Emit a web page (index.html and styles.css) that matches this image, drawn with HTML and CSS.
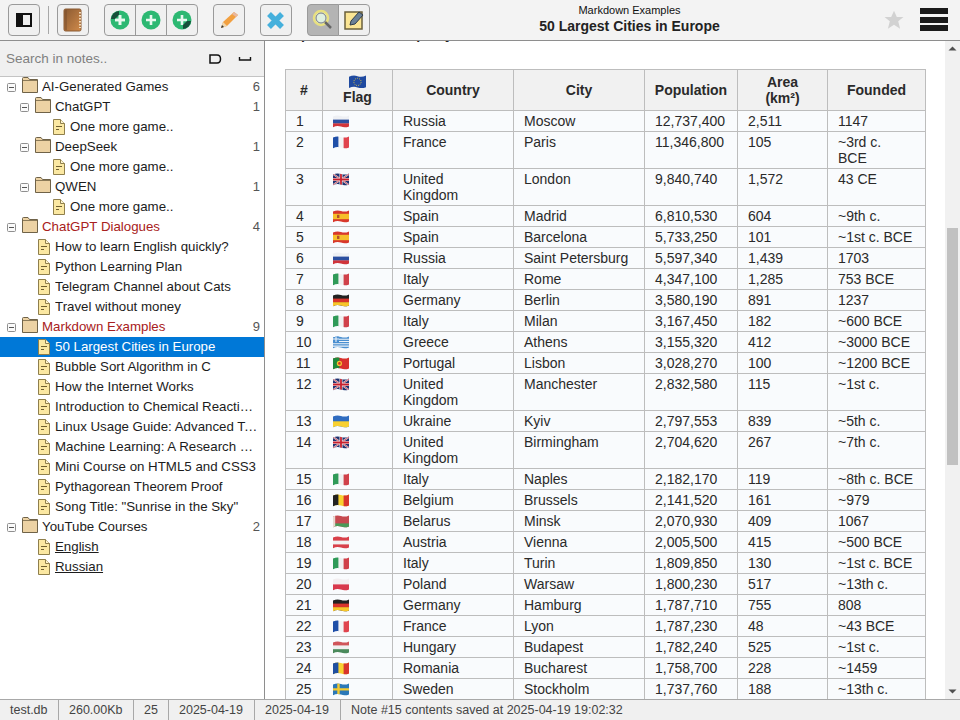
FILE: index.html
```html
<!DOCTYPE html>
<html lang="en">
<head>
<meta charset="utf-8">
<title>50 Largest Cities in Europe</title>
<link rel="stylesheet" href="styles.css">
</head>
<body>
<svg class="defs" aria-hidden="true">
  <defs>
    <clipPath id="wave"><path d="M0 1.600Q4 -.4 8 1T16 .4V11.400Q12 13 8 11.600T0 12.200Z"/></clipPath>
    <linearGradient id="bookg" x1="0" x2="1" y1="0" y2="1"><stop offset="0" stop-color="#8a5a32"/><stop offset="1" stop-color="#d08a4a"/></linearGradient>
    <symbol id="ru" viewBox="0 0 16 13"><g clip-path="url(#wave)"><rect width="16" height="13" fill="#eef0f4"/><rect y="4.600" width="16" height="4" fill="#2b4fa0"/><rect y="8.400" width="16" height="5" fill="#d0343a"/></g></symbol>
    <symbol id="fr" viewBox="0 0 16 13"><g clip-path="url(#wave)"><rect width="16" height="13" fill="#f2f2f4"/><rect width="5.400" height="13" fill="#1f4fa8"/><rect x="10.600" width="5.400" height="13" fill="#e0444e"/></g></symbol>
    <symbol id="gb" viewBox="0 0 16 13"><g clip-path="url(#wave)"><rect width="16" height="13" fill="#1f3270"/><path d="M0 1 16 12M16 1 0 12" stroke="#e8e8ee" stroke-width="1.800"/><path d="M0 1 16 12M16 1 0 12" stroke="#c8202e" stroke-width=".7"/><path d="M8 0V13M0 6.500H16" stroke="#eee" stroke-width="3"/><path d="M8 0V13M0 6.500H16" stroke="#c8202e" stroke-width="1.800"/></g></symbol>
    <symbol id="es" viewBox="0 0 16 13"><g clip-path="url(#wave)"><rect width="16" height="13" fill="#d8382c"/><rect y="3.800" width="16" height="5.400" fill="#f6bf2a"/><rect x="4" y="4.800" width="2.400" height="3.200" fill="#b0502c"/></g></symbol>
    <symbol id="it" viewBox="0 0 16 13"><g clip-path="url(#wave)"><rect width="16" height="13" fill="#f0f0f0"/><rect width="5.400" height="13" fill="#2f9a58"/><rect x="10.600" width="5.400" height="13" fill="#d0414a"/></g></symbol>
    <symbol id="de" viewBox="0 0 16 13"><g clip-path="url(#wave)"><rect width="16" height="13" fill="#222"/><rect y="4.600" width="16" height="4" fill="#d8352c"/><rect y="8.200" width="16" height="5" fill="#f8c62a"/></g></symbol>
    <symbol id="gr" viewBox="0 0 16 13"><g clip-path="url(#wave)"><rect width="16" height="13" fill="#4a8fd0"/><path d="M0 3.200H16M0 5.500H16M0 7.800H16M0 10.100H16" stroke="#eef3f8" stroke-width="1.100"/><rect width="6" height="6" fill="#4a8fd0"/><path d="M3 0V6M0 3H6" stroke="#eef3f8" stroke-width="1.100"/></g></symbol>
    <symbol id="pt" viewBox="0 0 16 13"><g clip-path="url(#wave)"><rect width="16" height="13" fill="#d8312c"/><rect width="6.400" height="13" fill="#1f8a3c"/><circle cx="6.400" cy="6.400" r="2.600" fill="#f2c530"/><circle cx="6.400" cy="6.400" r="1.300" fill="#d8312c"/></g></symbol>
    <symbol id="ua" viewBox="0 0 16 13"><g clip-path="url(#wave)"><rect width="16" height="13" fill="#2f6cc0"/><rect y="6.300" width="16" height="7" fill="#f8d030"/></g></symbol>
    <symbol id="be" viewBox="0 0 16 13"><g clip-path="url(#wave)"><rect width="16" height="13" fill="#f8d030"/><rect width="5.400" height="13" fill="#222"/><rect x="10.600" width="5.400" height="13" fill="#d8352c"/></g></symbol>
    <symbol id="by" viewBox="0 0 16 13"><g clip-path="url(#wave)"><rect width="16" height="13" fill="#c64a50"/><rect y="8.400" width="16" height="5" fill="#4a9a58"/><rect width="2.200" height="13" fill="#e8d8d0"/></g></symbol>
    <symbol id="at" viewBox="0 0 16 13"><g clip-path="url(#wave)"><rect width="16" height="13" fill="#d8404a"/><rect y="4.600" width="16" height="3.800" fill="#f2f2f2"/></g></symbol>
    <symbol id="pl" viewBox="0 0 16 13"><g clip-path="url(#wave)"><rect width="16" height="13" fill="#f2eef0"/><rect y="6.400" width="16" height="7" fill="#d8384c"/></g></symbol>
    <symbol id="hu" viewBox="0 0 16 13"><g clip-path="url(#wave)"><rect width="16" height="13" fill="#f0f0f0"/><rect width="16" height="4.400" fill="#d0555a"/><rect y="8.200" width="16" height="5" fill="#4a8a5c"/></g></symbol>
    <symbol id="ro" viewBox="0 0 16 13"><g clip-path="url(#wave)"><rect width="16" height="13" fill="#f8d030"/><rect width="5.400" height="13" fill="#1f4fa0"/><rect x="10.600" width="5.400" height="13" fill="#d8352c"/></g></symbol>
    <symbol id="se" viewBox="0 0 16 13"><g clip-path="url(#wave)"><rect width="16" height="13" fill="#2a78b8"/><path d="M5.500 0V13M0 6.400H16" stroke="#f4ca30" stroke-width="2.400"/></g></symbol>
    <symbol id="eu" viewBox="0 0 16 13"><g clip-path="url(#wave)"><rect width="16" height="13" fill="#1f4aa0"/><circle cx="8" cy="6.400" r="3.400" fill="none" stroke="#e8c840" stroke-width=".9" stroke-dasharray=".9 1"/></g></symbol>
    <symbol id="folder" viewBox="0 0 16 16"><path d="M.5 15.500V1.500Q.5 .5 1.500 .5H6L7.500 2.500H15.500V15.500Z" fill="#ecd2a4" stroke="#6f6248"/><path d="M1 3.500H15" stroke="#8b7a58"/></symbol>
    <symbol id="note" viewBox="0 0 14 16"><path d="M1.500 .5H8.500L12.500 4.500V15.500H1.500Z" fill="#fbe8a2" stroke="#8f7f4c"/><path d="M8.500 .5V4.500H12.500" fill="#fff6d0" stroke="#8f7f4c"/><path d="M4 7.500H10M4 10.500H7" stroke="#6f6030"/></symbol>
    <symbol id="minus" viewBox="0 0 9 9"><rect x=".5" y=".5" width="8" height="8" rx="1" fill="#fafafa" stroke="#8f8f8f"/><path d="M2 4.500H7" stroke="#555"/></symbol>
    <symbol id="plus" viewBox="0 0 20 20"><circle cx="10" cy="10" r="9.500" fill="#2cb872"/><path d="M10 5V15M5 10H15" stroke="#e8f8ef" stroke-width="2.600"/></symbol>
  </defs>
</svg>

<div class="app">
  <header class="toolbar">
    <div class="tools">
      <button class="tbtn" type="button"><svg width="16" height="14" viewBox="0 0 16 14"><rect x="1" y="1" width="14" height="12" fill="#eee" stroke="#111" stroke-width="2"/><rect x="1" y="1" width="6" height="12" fill="#111"/></svg></button>
      <span class="vsep"></span>
      <button class="tbtn" type="button"><svg width="20" height="24" viewBox="0 0 20 24"><rect x="1" y="1" width="17" height="22" rx="1.500" fill="url(#bookg)" stroke="#8a5a32"/><path d="M3 2V22" stroke="#7a4e2c"/><path d="M17 4V20" stroke="#f2d8b8" stroke-dasharray="1.500 1.500" stroke-width="2"/></svg></button>
      <div class="group gap-l">
        <button class="tbtn" type="button"><svg width="20" height="20"><use href="#plus"/><path d="M1 9A8.500 8.500 0 0 1 9 1V5L5 9Z" fill="#17503a"/><path d="M10 5V15M5 10H15" stroke="#e8f8ef" stroke-width="2.600"/></svg></button>
        <button class="tbtn" type="button"><svg width="20" height="20"><use href="#plus"/></svg></button>
        <button class="tbtn" type="button"><svg width="20" height="20"><use href="#plus"/><path d="M19 11A8.500 8.500 0 0 1 11 19V15L15 11Z" fill="#17503a"/></svg></button>
      </div>
      <button class="tbtn gap-l" type="button"><svg width="22" height="22" viewBox="0 0 22 22"><path d="M3 19 5 13 16 3 20 6 9 17Z" fill="#f2a040"/><path d="M16 3 20 6 18 8 14 5Z" fill="#e8b8a0"/><path d="M3 19 5 13 9 17Z" fill="#f0d8b0"/><path d="M3 19 4 16 6 18Z" fill="#333"/></svg></button>
      <button class="tbtn gap-l" type="button"><svg width="20" height="20" viewBox="0 0 20 20"><path d="M3 4 16 17M16 4 3 17" stroke="#45b0dc" stroke-width="5.500"/></svg></button>
      <div class="group gap-l">
        <button class="tbtn on" type="button"><svg width="24" height="24" viewBox="0 0 24 24"><circle cx="10" cy="10" r="7" fill="#dff0e0" stroke="#e8e080" stroke-width="2.500"/><circle cx="10" cy="10" r="5" fill="none" stroke="#778" stroke-width="1"/><path d="M14 14 20 20" stroke="#666" stroke-width="2.500"/></svg></button>
        <button class="tbtn" type="button"><svg width="20" height="20" viewBox="0 0 20 20"><rect x="1" y="2" width="17" height="17" fill="#fbe594" stroke="#6a5f3c" stroke-width="1.500"/><path d="M6 15 7 11 15 2 19 5 11 14Z" fill="#6b8096" stroke="#2f3c4c"/></svg></button>
      </div>
    </div>
    <div class="heading">
      <div class="crumb">Markdown Examples</div>
      <div class="title">50 Largest Cities in Europe</div>
    </div>
    <svg class="star" width="20" height="20" viewBox="0 0 20 20"><path d="M10 .8 12.800 7H19.500L14.200 11.300 16.100 18.800 10 14.800 3.900 18.800 5.800 11.300 .5 7H7.200Z" fill="#d2d2d2"/></svg>
    <div class="menu"><span></span><span></span><span></span></div>
  </header>

  <div class="body">
    <aside class="side">
      <div class="search">
        <span class="search-text">Search in notes..</span>
        <svg width="14" height="12" viewBox="0 0 14 12"><path d="M2 2H9Q12.500 2 12.500 6T9 10H2Z" fill="none" stroke="#111" stroke-width="1.500"/></svg>
        <svg width="14" height="12" viewBox="0 0 14 12"><path d="M1.500 4V7H12.500V4" fill="none" stroke="#111" stroke-width="1.400"/></svg>
      </div>
      <ul class="tree">
        <li class="row f0"><svg class="exp"><use href="#minus"/></svg><svg class="fld"><use href="#folder"/></svg><span class="lbl">AI-Generated Games</span><span class="cnt">6</span></li>
        <li class="row f1"><svg class="exp"><use href="#minus"/></svg><svg class="fld"><use href="#folder"/></svg><span class="lbl">ChatGPT</span><span class="cnt">1</span></li>
        <li class="row n2"><svg class="nt"><use href="#note"/></svg><span class="lbl">One more game..</span></li>
        <li class="row f1"><svg class="exp"><use href="#minus"/></svg><svg class="fld"><use href="#folder"/></svg><span class="lbl">DeepSeek</span><span class="cnt">1</span></li>
        <li class="row n2"><svg class="nt"><use href="#note"/></svg><span class="lbl">One more game..</span></li>
        <li class="row f1"><svg class="exp"><use href="#minus"/></svg><svg class="fld"><use href="#folder"/></svg><span class="lbl">QWEN</span><span class="cnt">1</span></li>
        <li class="row n2"><svg class="nt"><use href="#note"/></svg><span class="lbl">One more game..</span></li>
        <li class="row f0"><svg class="exp"><use href="#minus"/></svg><svg class="fld"><use href="#folder"/></svg><span class="lbl red">ChatGPT Dialogues</span><span class="cnt">4</span></li>
        <li class="row n1"><svg class="nt"><use href="#note"/></svg><span class="lbl">How to learn English quickly?</span></li>
        <li class="row n1"><svg class="nt"><use href="#note"/></svg><span class="lbl">Python Learning Plan</span></li>
        <li class="row n1"><svg class="nt"><use href="#note"/></svg><span class="lbl">Telegram Channel about Cats</span></li>
        <li class="row n1"><svg class="nt"><use href="#note"/></svg><span class="lbl">Travel without money</span></li>
        <li class="row f0"><svg class="exp"><use href="#minus"/></svg><svg class="fld"><use href="#folder"/></svg><span class="lbl red">Markdown Examples</span><span class="cnt">9</span></li>
        <li class="row n1 sel"><svg class="nt"><use href="#note"/></svg><span class="lbl">50 Largest Cities in Europe</span></li>
        <li class="row n1"><svg class="nt"><use href="#note"/></svg><span class="lbl">Bubble Sort Algorithm in C</span></li>
        <li class="row n1"><svg class="nt"><use href="#note"/></svg><span class="lbl">How the Internet Works</span></li>
        <li class="row n1"><svg class="nt"><use href="#note"/></svg><span class="lbl">Introduction to Chemical Reactions</span></li>
        <li class="row n1"><svg class="nt"><use href="#note"/></svg><span class="lbl">Linux Usage Guide: Advanced Techniques</span></li>
        <li class="row n1"><svg class="nt"><use href="#note"/></svg><span class="lbl">Machine Learning: A Research Overview</span></li>
        <li class="row n1"><svg class="nt"><use href="#note"/></svg><span class="lbl">Mini Course on HTML5 and CSS3</span></li>
        <li class="row n1"><svg class="nt"><use href="#note"/></svg><span class="lbl">Pythagorean Theorem Proof</span></li>
        <li class="row n1"><svg class="nt"><use href="#note"/></svg><span class="lbl">Song Title: "Sunrise in the Sky"</span></li>
        <li class="row f0"><svg class="exp"><use href="#minus"/></svg><svg class="fld"><use href="#folder"/></svg><span class="lbl">YouTube Courses</span><span class="cnt">2</span></li>
        <li class="row n1"><svg class="nt"><use href="#note"/></svg><span class="lbl ul">English</span></li>
        <li class="row n1"><svg class="nt"><use href="#note"/></svg><span class="lbl ul">Russian</span></li>
      </ul>
    </aside>

    <main class="content">
      <div class="doc">
        <p class="clipped">Top 5 Cities of Europe by Size</p>
        <table class="cities">
          <colgroup><col class="c1"><col class="c2"><col class="c3"><col class="c4"><col class="c5"><col class="c6"><col class="c7"></colgroup>
          <thead>
            <tr><th>#</th><th><svg class="hflag"><use href="#eu"/></svg>Flag</th><th>Country</th><th>City</th><th>Population</th><th>Area<br>(km²)</th><th>Founded</th></tr>
          </thead>
          <tbody>
            <tr><td>1</td><td><svg class="flag"><use href="#ru"/></svg></td><td>Russia</td><td>Moscow</td><td>12,737,400</td><td>2,511</td><td>1147</td></tr>
            <tr><td>2</td><td><svg class="flag"><use href="#fr"/></svg></td><td>France</td><td>Paris</td><td>11,346,800</td><td>105</td><td>~3rd c.<br>BCE</td></tr>
            <tr><td>3</td><td><svg class="flag"><use href="#gb"/></svg></td><td>United<br>Kingdom</td><td>London</td><td>9,840,740</td><td>1,572</td><td>43 CE</td></tr>
            <tr><td>4</td><td><svg class="flag"><use href="#es"/></svg></td><td>Spain</td><td>Madrid</td><td>6,810,530</td><td>604</td><td>~9th c.</td></tr>
            <tr><td>5</td><td><svg class="flag"><use href="#es"/></svg></td><td>Spain</td><td>Barcelona</td><td>5,733,250</td><td>101</td><td>~1st c. BCE</td></tr>
            <tr><td>6</td><td><svg class="flag"><use href="#ru"/></svg></td><td>Russia</td><td>Saint Petersburg</td><td>5,597,340</td><td>1,439</td><td>1703</td></tr>
            <tr><td>7</td><td><svg class="flag"><use href="#it"/></svg></td><td>Italy</td><td>Rome</td><td>4,347,100</td><td>1,285</td><td>753 BCE</td></tr>
            <tr><td>8</td><td><svg class="flag"><use href="#de"/></svg></td><td>Germany</td><td>Berlin</td><td>3,580,190</td><td>891</td><td>1237</td></tr>
            <tr><td>9</td><td><svg class="flag"><use href="#it"/></svg></td><td>Italy</td><td>Milan</td><td>3,167,450</td><td>182</td><td>~600 BCE</td></tr>
            <tr><td>10</td><td><svg class="flag"><use href="#gr"/></svg></td><td>Greece</td><td>Athens</td><td>3,155,320</td><td>412</td><td>~3000 BCE</td></tr>
            <tr><td>11</td><td><svg class="flag"><use href="#pt"/></svg></td><td>Portugal</td><td>Lisbon</td><td>3,028,270</td><td>100</td><td>~1200 BCE</td></tr>
            <tr><td>12</td><td><svg class="flag"><use href="#gb"/></svg></td><td>United<br>Kingdom</td><td>Manchester</td><td>2,832,580</td><td>115</td><td>~1st c.</td></tr>
            <tr><td>13</td><td><svg class="flag"><use href="#ua"/></svg></td><td>Ukraine</td><td>Kyiv</td><td>2,797,553</td><td>839</td><td>~5th c.</td></tr>
            <tr><td>14</td><td><svg class="flag"><use href="#gb"/></svg></td><td>United<br>Kingdom</td><td>Birmingham</td><td>2,704,620</td><td>267</td><td>~7th c.</td></tr>
            <tr><td>15</td><td><svg class="flag"><use href="#it"/></svg></td><td>Italy</td><td>Naples</td><td>2,182,170</td><td>119</td><td>~8th c. BCE</td></tr>
            <tr><td>16</td><td><svg class="flag"><use href="#be"/></svg></td><td>Belgium</td><td>Brussels</td><td>2,141,520</td><td>161</td><td>~979</td></tr>
            <tr><td>17</td><td><svg class="flag"><use href="#by"/></svg></td><td>Belarus</td><td>Minsk</td><td>2,070,930</td><td>409</td><td>1067</td></tr>
            <tr><td>18</td><td><svg class="flag"><use href="#at"/></svg></td><td>Austria</td><td>Vienna</td><td>2,005,500</td><td>415</td><td>~500 BCE</td></tr>
            <tr><td>19</td><td><svg class="flag"><use href="#it"/></svg></td><td>Italy</td><td>Turin</td><td>1,809,850</td><td>130</td><td>~1st c. BCE</td></tr>
            <tr><td>20</td><td><svg class="flag"><use href="#pl"/></svg></td><td>Poland</td><td>Warsaw</td><td>1,800,230</td><td>517</td><td>~13th c.</td></tr>
            <tr><td>21</td><td><svg class="flag"><use href="#de"/></svg></td><td>Germany</td><td>Hamburg</td><td>1,787,710</td><td>755</td><td>808</td></tr>
            <tr><td>22</td><td><svg class="flag"><use href="#fr"/></svg></td><td>France</td><td>Lyon</td><td>1,787,230</td><td>48</td><td>~43 BCE</td></tr>
            <tr><td>23</td><td><svg class="flag"><use href="#hu"/></svg></td><td>Hungary</td><td>Budapest</td><td>1,782,240</td><td>525</td><td>~1st c.</td></tr>
            <tr><td>24</td><td><svg class="flag"><use href="#ro"/></svg></td><td>Romania</td><td>Bucharest</td><td>1,758,700</td><td>228</td><td>~1459</td></tr>
            <tr><td>25</td><td><svg class="flag"><use href="#se"/></svg></td><td>Sweden</td><td>Stockholm</td><td>1,737,760</td><td>188</td><td>~13th c.</td></tr>
          </tbody>
        </table>
      </div>
      <div class="sbar">
        <svg class="arrow" width="15" height="15" viewBox="0 0 15 15"><path d="M3.500 9.500H11.500L7.500 5.500Z" fill="#505050"/></svg>
        <div class="thumb"></div>
        <svg class="arrow end" width="15" height="15" viewBox="0 0 15 15"><path d="M3.500 5.500H11.500L7.500 9.500Z" fill="#505050"/></svg>
      </div>
    </main>
  </div>

  <footer class="status">
    <span class="s1">test.db</span>
    <span class="s2">260.00Kb</span>
    <span class="s3">25</span>
    <span class="s4">2025-04-19</span>
    <span class="s5">2025-04-19</span>
    <span class="s6">Note #15 contents saved at 2025-04-19 19:02:32</span>
  </footer>
</div>
</body>
</html>
```

FILE: styles.css
```css
* { box-sizing: border-box; }
html, body { margin: 0; height: 100%; overflow: hidden; }
body { font-family: "Liberation Sans", Arial, sans-serif; font-size: 13px; color: #222; background: #fff; }
.defs { position: absolute; width: 0; height: 0; }
.app { display: flex; flex-direction: column; width: 960px; height: 720px; }

.toolbar { flex: 0 0 41px; display: flex; align-items: flex-start; background: #f3f3f3; border-bottom: 1px solid #8e8e8e; }
.tools { display: flex; align-items: center; padding: 4px 0 0 8px; }
.tbtn { width: 32px; height: 32px; padding: 0; display: flex; align-items: center; justify-content: center; background: #f0f0f0; border: 1px solid #9a9a9a; border-radius: 4px; }
.vsep { width: 1px; height: 28px; margin: 0 8px; background: #a8a8a8; }
.gap-l { margin-left: 15px; }
.group { display: flex; }
.group .tbtn { border-radius: 0; margin-left: -1px; }
.group .tbtn:first-child { border-radius: 4px 0 0 4px; margin-left: 0; }
.group .tbtn:last-child { border-radius: 0 4px 4px 0; }
.tbtn.on { background: #b4b4b4; }
.heading { flex: 1; text-align: center; padding: 4px 0 0 5px; color: #111; }
.crumb { font-size: 11px; line-height: 13px; }
.title { font-size: 14px; font-weight: 700; line-height: 17px; margin-top: 1px; color: #222; }
.star { margin: 10px 16px 0 0; }
.menu { display: flex; flex-direction: column; gap: 2.500px; width: 28px; margin: 8px 12px 0 0; }
.menu span { height: 6px; background: #1a1a1a; }

.body { flex: 1; min-height: 0; display: flex; }
.side { flex: 0 0 265px; width: 265px; min-width: 0; overflow: hidden; display: flex; flex-direction: column; border-right: 1px solid #8e8e8e; }
.search { flex: 0 0 36px; display: flex; align-items: center; gap: 16px; padding: 0 12px 0 6px; background: #f0f0f0; border-bottom: 1px solid #c4c4c4; }
.search-text { flex: 1; color: #808080; font-size: 13.500px; }
.tree { list-style: none; margin: 0; padding: 0; font-size: 13.300px; }
.row { display: flex; align-items: center; height: 20px; padding-right: 4px; color: #1c1c1c; }
.row.f0 { padding-left: 7px; }
.row.f1 { padding-left: 20px; }
.row.n1 { padding-left: 37px; }
.row.n2 { padding-left: 52px; }
.exp { width: 9px; height: 9px; margin-right: 6px; flex: none; }
.fld { width: 16px; height: 16px; margin-right: 4px; flex: none; position: relative; top: -2px; }
.nt { width: 14px; height: 16px; margin-right: 4px; flex: none; }
.lbl { flex: 1; min-width: 0; white-space: nowrap; overflow: hidden; text-overflow: ellipsis; padding-bottom: 2px; }
.cnt { color: #555; font-size: 13px; padding-bottom: 2px; }
.red { color: #a82020; }
.ul { text-decoration: underline; }
.sel { background: #0078d7; color: #fff; }

.content { flex: 1; min-width: 0; display: flex; overflow: hidden; }
.doc { flex: 1; min-width: 0; padding: 0 20px; overflow: hidden; }
.clipped { margin: -15px 0 26px; font-weight: 700; font-size: 14px; line-height: 17px; height: 17px; white-space: nowrap; }
.cities { border-collapse: collapse; table-layout: fixed; width: 640px; font-size: 14px; line-height: 16px; color: #2a2a2a; }
.c1 { width: 37px; } .c2 { width: 70px; } .c3 { width: 121px; } .c4 { width: 131px; } .c5 { width: 93px; } .c6 { width: 90px; } .c7 { width: 98px; }
.cities th, .cities td { border: 1px solid #bdbdbd; padding: 2px 10px; text-align: left; vertical-align: top; }
.cities th { background: #f1f1f1; text-align: center; vertical-align: middle; font-size: 14px; padding: 4px 0; }
.cities td { background: #f9fbfd; }
.hflag { display: block; width: 17px; height: 14px; margin: -1px auto 0; }
.flag { display: block; width: 16px; height: 13px; margin-top: 2px; }
.sbar { flex: 0 0 15px; display: flex; flex-direction: column; background: #f1f1f1; }
.arrow { flex: none; }
.arrow.end { margin-top: auto; }
.thumb { height: 237px; margin: 172px 2px 0; background: #c1c1c1; }

.status { flex: 0 0 21px; display: flex; align-items: center; background: #f0f0f0; border-top: 1px solid #a8a8a8; font-size: 12.500px; color: #444; }
.status span { height: 100%; padding: 3px 0 0 10px; border-right: 1px solid #a8a8a8; white-space: nowrap; }
.s1 { width: 59px; } .s2 { width: 75px; } .s3 { width: 35px; } .s4 { width: 86px; } .s5 { width: 86px; }
.status .s6 { border-right: 0; }
```
